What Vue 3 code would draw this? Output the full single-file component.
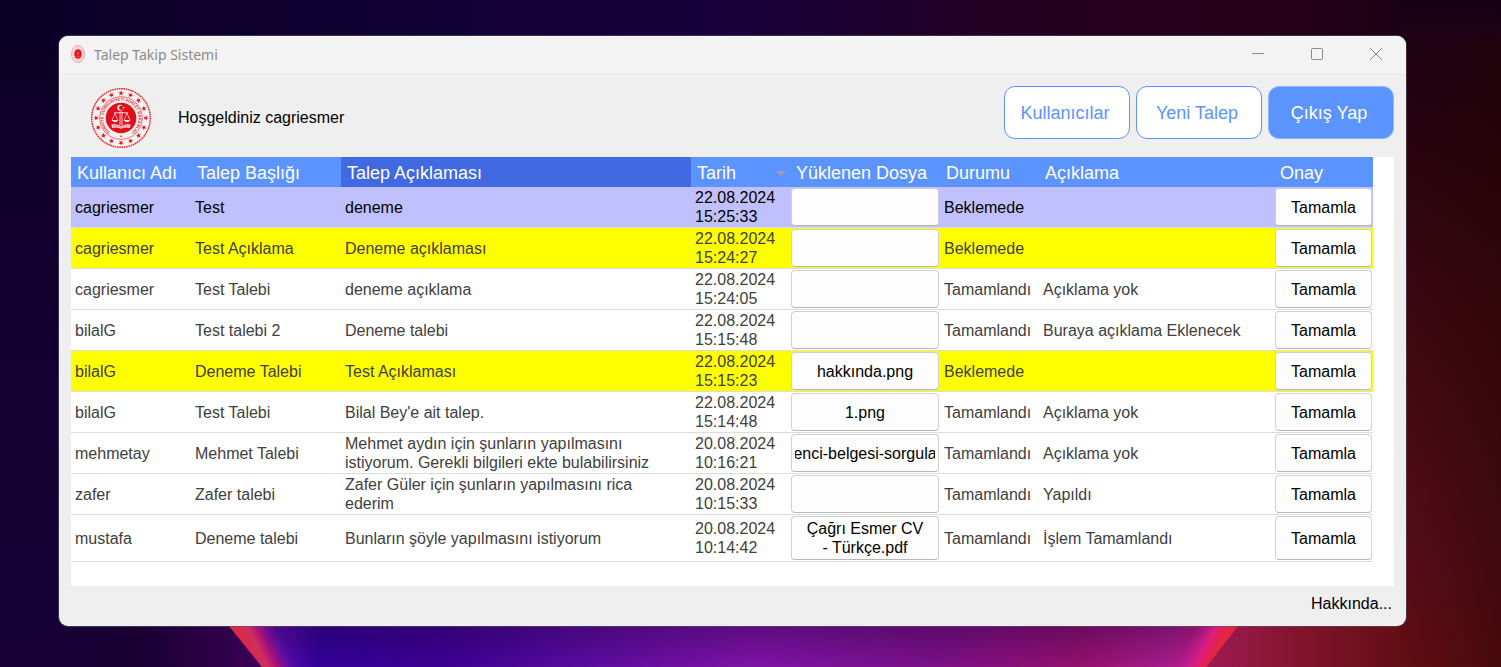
<script setup>
const columns = [
  { key: 'user', title: 'Kullanıcı Adı' },
  { key: 'subject', title: 'Talep Başlığı' },
  { key: 'detail', title: 'Talep Açıklaması', active: true },
  { key: 'date', title: 'Tarih', sorted: true },
  { key: 'file', title: 'Yüklenen Dosya' },
  { key: 'status', title: 'Durumu' },
  { key: 'note', title: 'Açıklama' },
  { key: 'approve', title: 'Onay' },
]

const rows = [
  { user: 'cagriesmer', subject: 'Test', detail: 'deneme', date: '22.08.2024 15:25:33', file: '', status: 'Beklemede', note: '', tone: 'selected' },
  { user: 'cagriesmer', subject: 'Test Açıklama', detail: 'Deneme açıklaması', date: '22.08.2024 15:24:27', file: '', status: 'Beklemede', note: '', tone: 'pending' },
  { user: 'cagriesmer', subject: 'Test Talebi', detail: 'deneme açıklama', date: '22.08.2024 15:24:05', file: '', status: 'Tamamlandı', note: 'Açıklama yok' },
  { user: 'bilalG', subject: 'Test talebi 2', detail: 'Deneme talebi', date: '22.08.2024 15:15:48', file: '', status: 'Tamamlandı', note: 'Buraya açıklama Eklenecek' },
  { user: 'bilalG', subject: 'Deneme Talebi', detail: 'Test Açıklaması', date: '22.08.2024 15:15:23', file: 'hakkında.png', status: 'Beklemede', note: '', tone: 'pending' },
  { user: 'bilalG', subject: 'Test Talebi', detail: "Bilal Bey'e ait talep.", date: '22.08.2024 15:14:48', file: '1.png', status: 'Tamamlandı', note: 'Açıklama yok' },
  { user: 'mehmetay', subject: 'Mehmet Talebi', detail: 'Mehmet aydın için şunların yapılmasını istiyorum. Gerekli bilgileri ekte bulabilirsiniz', date: '20.08.2024 10:16:21', file: 'enci-belgesi-sorgula', status: 'Tamamlandı', note: 'Açıklama yok' },
  { user: 'zafer', subject: 'Zafer talebi', detail: 'Zafer Güler için şunların yapılmasını rica ederim', date: '20.08.2024 10:15:33', file: '', status: 'Tamamlandı', note: 'Yapıldı' },
  { user: 'mustafa', subject: 'Deneme talebi', detail: 'Bunların şöyle yapılmasını istiyorum', date: '20.08.2024 10:14:42', file: 'Çağrı Esmer CV - Türkçe.pdf', status: 'Tamamlandı', note: 'İşlem Tamamlandı' },
]

const starAngles = Array.from({ length: 16 }, (_, i) => i * 22.5)
</script>

<template>
  <div class="desktop">
    <svg class="wallpaper" viewBox="0 0 1501 667" preserveAspectRatio="none" aria-hidden="true">
      <defs>
        <linearGradient id="sky" x1="0" x2="1" y1="0" y2="0">
          <stop offset="0" stop-color="#0a0026" />
          <stop offset="0.28" stop-color="#100034" />
          <stop offset="0.48" stop-color="#17003c" />
          <stop offset="0.66" stop-color="#230023" />
          <stop offset="0.84" stop-color="#260017" />
          <stop offset="1" stop-color="#150010" />
        </linearGradient>
        <linearGradient id="leftSide" x1="0" x2="0" y1="0" y2="1">
          <stop offset="0" stop-color="#0a0024" />
          <stop offset="0.4" stop-color="#13002f" />
          <stop offset="1" stop-color="#160034" />
        </linearGradient>
        <linearGradient id="rightSide" x1="0" x2="0" y1="0" y2="1">
          <stop offset="0" stop-color="#1a0014" />
          <stop offset="0.25" stop-color="#2a0410" />
          <stop offset="0.5" stop-color="#400811" />
          <stop offset="0.8" stop-color="#530c1a" />
          <stop offset="1" stop-color="#620e12" />
        </linearGradient>
        <linearGradient id="rightShade" x1="0" x2="1" y1="0" y2="0">
          <stop offset="0" stop-color="#200400" stop-opacity="0" />
          <stop offset="1" stop-color="#200400" stop-opacity="0.4" />
        </linearGradient>
        <linearGradient id="floorLeft" x1="0" x2="1" y1="0" y2="0">
          <stop offset="0" stop-color="#160034" />
          <stop offset="0.3" stop-color="#180031" />
          <stop offset="0.7" stop-color="#30004c" />
          <stop offset="1" stop-color="#4c006c" />
        </linearGradient>
        <linearGradient id="floorRight" x1="0" x2="1" y1="0" y2="0">
          <stop offset="0" stop-color="#a51c56" />
          <stop offset="0.55" stop-color="#80132c" />
          <stop offset="1" stop-color="#620e14" />
        </linearGradient>
        <linearGradient id="glow" gradientUnits="userSpaceOnUse" x1="240" x2="1226" y1="626" y2="626">
          <stop offset="0" stop-color="#a01090" />
          <stop offset="0.04" stop-color="#5a0eb0" />
          <stop offset="0.08" stop-color="#32009a" />
          <stop offset="0.2" stop-color="#3a0092" />
          <stop offset="0.36" stop-color="#5c0ca0" />
          <stop offset="0.52" stop-color="#7f12a6" />
          <stop offset="0.7" stop-color="#7b1088" />
          <stop offset="0.85" stop-color="#940f6e" />
          <stop offset="0.94" stop-color="#a81c8a" />
          <stop offset="1" stop-color="#dc1c80" />
        </linearGradient>
        <linearGradient id="glowShade" x1="0" x2="0" y1="0" y2="1">
          <stop offset="0" stop-color="#20003c" stop-opacity="0.35" />
          <stop offset="1" stop-color="#20003c" stop-opacity="0" />
        </linearGradient>
        <linearGradient id="edgeLeft" gradientUnits="userSpaceOnUse" x1="242" y1="650" x2="278" y2="632">
          <stop offset="0" stop-color="#e0263c" />
          <stop offset="0.4" stop-color="#cc2e60" />
          <stop offset="0.6" stop-color="#a81078" />
          <stop offset="1" stop-color="#7010a8" stop-opacity="0" />
        </linearGradient>
        <linearGradient id="edgeRight" gradientUnits="userSpaceOnUse" x1="1228" y1="650" x2="1194" y2="632">
          <stop offset="0" stop-color="#dc2a40" />
          <stop offset="0.35" stop-color="#e22448" />
          <stop offset="0.55" stop-color="#e01c80" />
          <stop offset="1" stop-color="#b81e98" stop-opacity="0" />
        </linearGradient>
      </defs>
      <rect width="1501" height="667" fill="url(#sky)" />
      <rect width="62" height="667" fill="url(#leftSide)" />
      <rect x="1400" width="101" height="667" fill="url(#rightSide)" />
      <rect x="1400" y="37" width="101" height="630" fill="url(#rightShade)" />
      <rect x="60" y="620" width="240" height="47" fill="url(#floorLeft)" />
      <rect x="1190" y="620" width="210" height="47" fill="url(#floorRight)" />
      <path d="M229 626 L262 667 H1206 L1238 626 Z" fill="url(#glow)" />
      <path d="M229 626 L262 667 H1206 L1238 626 Z" fill="url(#glowShade)" />
      <path d="M229 626 L262 667 H310 L280 626 Z" fill="url(#edgeLeft)" />
      <path d="M1238 626 L1206 667 H1162 L1192 626 Z" fill="url(#edgeRight)" />
    </svg>

    <main class="window">
      <header class="titlebar">
        <svg class="app-icon" viewBox="0 0 14 18" aria-hidden="true">
          <ellipse cx="7" cy="9" rx="6.5" ry="8.8" fill="#f6dcdc" stroke="#eda9ab" stroke-width="1" />
          <ellipse cx="7" cy="9" rx="4.8" ry="6.6" fill="none" stroke="#f0b4b6" stroke-width="1" stroke-dasharray="1 1" />
          <ellipse cx="7" cy="9" rx="3.7" ry="4.8" fill="#e0141e" />
          <path d="M7 6.5V11M5.2 8.2H8.8M5 11.4H9" stroke="#ea5a60" stroke-width="0.7" fill="none" />
        </svg>
        <h1 class="title">Talep Takip Sistemi</h1>
        <div class="window-controls">
          <button type="button" aria-label="Simge durumuna küçült">
            <svg viewBox="0 0 14 14"><path d="M1 6.500H13" /></svg>
          </button>
          <button type="button" aria-label="Ekranı kapla">
            <svg viewBox="0 0 14 14"><rect x="1.500" y="1.500" width="11" height="11" rx="1" /></svg>
          </button>
          <button type="button" aria-label="Kapat">
            <svg viewBox="0 0 14 14"><path d="M1 1L13 13M13 1L1 13" /></svg>
          </button>
        </div>
      </header>

      <section class="toolbar">
        <svg class="emblem" viewBox="-31 -31 62 62" role="img" aria-label="Adalet Bakanlığı">
          <defs>
            <path id="ring" d="M-5 16.900 A17.600 17.600 0 1 1 5 16.900" />
            <path id="star" d="M0 -2.700 L0.700 -0.900 L2.600 -0.800 L1.100 0.400 L1.600 2.200 L0 1.100 L-1.600 2.200 L-1.100 0.400 L-2.600 -0.800 L-0.700 -0.900 Z" />
          </defs>
          <circle r="29.300" fill="#f6f1f1" stroke="#e2303a" stroke-width="1.500" stroke-dasharray="1.700 0.600" />
          <use v-for="a in starAngles" :key="a" href="#star" :transform="`rotate(${a}) translate(0 -24.800)`" fill="#dd1420" />
          <circle r="21.300" fill="none" stroke="#e4525a" stroke-width="0.800" />
          <text class="emblem-text"><textPath href="#ring" startOffset="50%" text-anchor="middle">TÜRKİYE CUMHURİYETİ ADALET BAKANLIĞI</textPath></text>
          <circle cy="18.200" r="0.800" fill="#dd1420" />
          <circle r="15.300" fill="#df0f1b" />
          <circle cx="-0.800" cy="-10.300" r="2.900" fill="#fff" />
          <circle cx="0.200" cy="-10.300" r="2.200" fill="#df0f1b" />
          <use href="#star" transform="translate(2.600 -10.300) scale(0.450)" fill="#fff" />
          <g fill="none" stroke="#fff" stroke-width="0.800">
            <path d="M-7 -5.200 Q-3 -4.600 0 -6 Q3 -4.600 7 -5.200" />
            <path d="M-1 -6V7M1 -6V7" />
            <path d="M-6 -5L-9 2.500H-3ZM6 -5L3 2.500H9Z" stroke-width="0.600" />
          </g>
          <path d="M-9.200 2.300H-2.800Q-6 6 -9.200 2.300ZM9.200 2.300H2.800Q6 6 9.200 2.300Z" fill="#fff" />
          <path d="M-9.500 6.500Q-4 5.500 0 8Q4 5.500 9.500 6.500L9 10Q4 8.700 0 10.800Q-4 8.700 -9 10Z" fill="#fbe0e0" />
          <path d="M-8 8Q-3.500 7 0 9.400Q3.500 7 8 8" fill="none" stroke="#df0f1b" stroke-width="0.500" />
        </svg>
        <p class="welcome">Hoşgeldiniz cagriesmer</p>
        <nav class="actions">
          <button type="button" class="action">Kullanıcılar</button>
          <button type="button" class="action">Yeni Talep</button>
          <button type="button" class="action primary">Çıkış Yap</button>
        </nav>
      </section>

      <section class="panel">
        <table>
          <colgroup>
            <col v-for="c in columns" :key="c.key" :class="'col-' + c.key" />
          </colgroup>
          <thead>
            <tr>
              <th v-for="c in columns" :key="c.key" scope="col" :class="{ active: c.active }" :aria-sort="c.sorted ? 'descending' : undefined">
                <span class="head">{{ c.title }}<i v-if="c.sorted" class="sort"></i></span>
              </th>
            </tr>
          </thead>
          <tbody>
            <tr v-for="r in rows" :key="r.date" :class="r.tone">
              <td>{{ r.user }}</td>
              <td>{{ r.subject }}</td>
              <td class="detail">{{ r.detail }}</td>
              <td>{{ r.date }}</td>
              <td class="control">
                <button type="button" class="cell-button" :aria-label="r.file || 'Dosya yok'">
                  <span class="file" :class="{ wrapped: r.file.includes(' ') }">{{ r.file }}</span>
                </button>
              </td>
              <td>{{ r.status }}</td>
              <td>{{ r.note }}</td>
              <td class="control"><button type="button" class="cell-button">Tamamla</button></td>
            </tr>
          </tbody>
        </table>
      </section>

      <footer class="footer"><a href="#hakkinda">Hakkında...</a></footer>
    </main>
  </div>
</template>

<style>
body {
  margin: 0;
}
</style>

<style scoped>
.desktop {
  position: relative;
  display: flex;
  box-sizing: border-box;
  min-height: 100vh;
  padding: 36px 95px 41px 59px;
  background: #100030;
  font-family: "Liberation Sans", Arial, sans-serif;
  font-size: 16px;
  line-height: 19px;
  color: #000;
}
.wallpaper {
  position: absolute;
  inset: 0;
  width: 100%;
  height: 100%;
}
.window {
  position: relative;
  display: flex;
  flex: 1;
  flex-direction: column;
  min-width: 0;
  overflow: hidden;
  border-radius: 9px;
  background: #efefef;
  box-shadow: 0 0 0 1px rgba(90, 80, 100, 0.6);
}
button {
  margin: 0;
  font: inherit;
  color: inherit;
}
.titlebar {
  display: flex;
  align-items: center;
  box-sizing: border-box;
  height: 37px;
  padding: 0 1px 1px 12px;
  background: #f3f3f3;
}
.app-icon {
  width: 14px;
  height: 18px;
}
.title {
  margin: 0 0 0 9px;
  font-family: "Noto Sans", "Open Sans", sans-serif;
  font-size: 14px;
  font-weight: 400;
  color: #8c8c8c;
}
.window-controls {
  display: flex;
  margin-left: auto;
}
.window-controls button {
  display: flex;
  align-items: center;
  justify-content: center;
  width: 59px;
  height: 36px;
  padding: 0;
  border: 0;
  background: none;
}
.window-controls svg {
  width: 14px;
  height: 14px;
  fill: none;
  stroke: #8a8a8a;
  stroke-width: 1;
}
.toolbar {
  display: flex;
  align-items: center;
  height: 84px;
  padding: 0 12px 0 31px;
}
.emblem {
  flex: none;
  width: 62px;
  height: 62px;
  margin-top: 6px;
}
.emblem-text {
  font-size: 4px;
  font-weight: 700;
  fill: #dd2a34;
}
.welcome {
  margin: 5px 0 0 26px;
}
.actions {
  display: flex;
  gap: 6px;
  margin: 0 0 5px auto;
}
.action {
  width: 126px;
  height: 53px;
  padding: 2px 4px 0 0;
  border: 1px solid #5c94ff;
  border-radius: 11px;
  background: #fff;
  font-size: 18px;
  color: #5c94ff;
}
.action.primary {
  border-color: #8fb5ff;
  background: #5c94ff;
  color: #fff;
}
.panel {
  flex: 1;
  margin: 0 12px;
  padding-right: 21px;
  background: #fff;
}
table {
  width: 100%;
  table-layout: fixed;
  border-collapse: separate;
  border-spacing: 0;
}
.col-user {
  width: 120px;
}
.col-subject {
  width: 150px;
}
.col-detail {
  width: 350px;
}
.col-date {
  width: 99px;
}
.col-file {
  width: 150px;
}
.col-status {
  width: 99px;
}
.col-approve {
  width: 99px;
}
th {
  height: 30px;
  box-sizing: border-box;
  padding: 2px 4px 0 6px;
  background: #5c94ff;
  font-size: 18px;
  font-weight: 400;
  text-align: left;
  white-space: nowrap;
  color: #fff;
}
th.active {
  background: #4169e1;
}
.head {
  display: flex;
  align-items: center;
  justify-content: space-between;
}
.sort {
  border: 5px solid transparent;
  border-top-color: #9a9fa8;
  border-bottom: 0;
}
td {
  box-sizing: border-box;
  height: 41px;
  padding: 0 4px;
  border-bottom: 1px solid #dcdcdc;
  color: #404040;
}
td.detail {
  padding-right: 12px;
}
.selected td {
  background: #c0c0ff;
  color: #000;
}
.pending td {
  background: #ff0;
}
td.control {
  padding: 1px;
}
.cell-button {
  display: flex;
  align-items: center;
  justify-content: center;
  box-sizing: border-box;
  width: 100%;
  min-height: 38px;
  padding: 2px 3px;
  overflow: hidden;
  border: 1px solid #d0d0d0;
  border-bottom-color: #b8b8b8;
  border-radius: 4px;
  background: #fdfdfd;
  color: #000;
}
.file {
  display: flex;
  justify-content: center;
  width: 100%;
  overflow: hidden;
  white-space: nowrap;
}
.file.wrapped {
  padding: 0 8px;
  white-space: normal;
}
tbody tr:last-child .cell-button {
  min-height: 44px;
}
.footer {
  display: flex;
  justify-content: flex-end;
  align-items: center;
  height: 40px;
  padding: 0 14px 5px;
  box-sizing: border-box;
}
.footer a {
  color: #000;
  text-decoration: none;
}
</style>
